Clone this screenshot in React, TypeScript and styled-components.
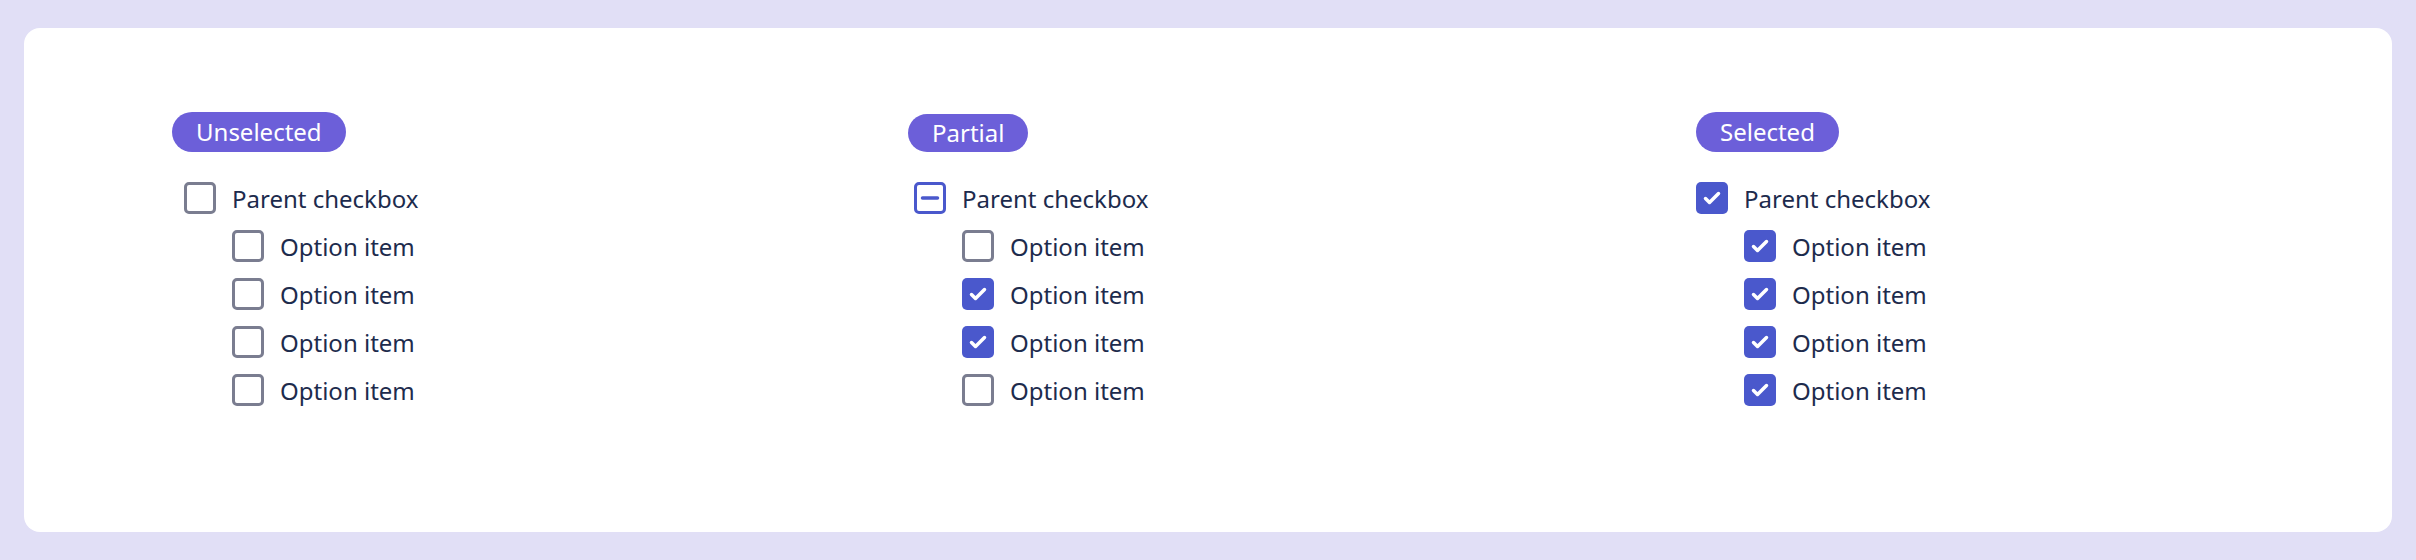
import React from "react";
import styled, { createGlobalStyle } from "styled-components";

const Global = createGlobalStyle`
  html, body { margin: 0; padding: 0; }
  body {
    background: #e1dff6;
    font-family: "Noto Sans", "Open Sans", sans-serif;
  }
`;

const Page = styled.div`
  box-sizing: border-box;
  width: 2416px;
  height: 560px;
  padding: 28px 24px;
  background: #e1dff6;
`;

const Card = styled.div`
  box-sizing: border-box;
  height: 504px;
  background: #ffffff;
  border-radius: 16px;
  padding: 84px 0 0 148px;
  display: grid;
  grid-template-columns: 736px 788px 1fr;
  align-items: start;
`;

const Column = styled.section`
  display: flex;
  flex-direction: column;
  align-items: flex-start;
`;

const Badge = styled.span<{ $nudge?: number }>`
  box-sizing: border-box;
  display: inline-flex;
  align-items: center;
  height: ${(p) => 40 - (p.$nudge ?? 0)}px;
  margin-top: ${(p) => p.$nudge ?? 0}px;
  padding: 0 24px;
  border-radius: 20px;
  background: #6c5fd9;
  color: #ffffff;
  font-size: 24px;
  line-height: 1;
`;

const List = styled.ul<{ $indent: number }>`
  list-style: none;
  margin: 22px 0 0 ${(p) => p.$indent}px;
  padding: 0;
  display: flex;
  flex-direction: column;
`;

const Row = styled.li<{ $child?: boolean }>`
  display: flex;
  align-items: center;
  gap: 16px;
  height: 48px;
  padding-left: ${(p) => (p.$child ? 48 : 0)}px;
  color: #1d2b4d;
  font-size: 24px;
`;

type State = "off" | "on" | "mixed";

const Box = styled.span<{ $state: State }>`
  box-sizing: border-box;
  flex: none;
  width: 32px;
  height: 32px;
  border-radius: 5px;
  display: inline-flex;
  align-items: center;
  justify-content: center;
  border: ${(p) =>
    p.$state === "on"
      ? "none"
      : p.$state === "mixed"
      ? "3px solid #4a58cc"
      : "3px solid #7a7d90"};
  background: ${(p) => (p.$state === "on" ? "#4a58cc" : "#ffffff")};
`;

const Label = styled.span`
  white-space: nowrap;
`;

function Checkbox({ state }: { state: State }) {
  return (
    <Box $state={state}>
      {state === "on" && (
        <svg width="32" height="32" viewBox="0 0 32 32" fill="none">
          <path
            d="M9.5 16.5 L13.5 20.5 L22.5 11.5"
            stroke="#ffffff"
            strokeWidth="3.5"
            strokeLinecap="round"
            strokeLinejoin="round"
          />
        </svg>
      )}
      {state === "mixed" && (
        <svg width="26" height="26" viewBox="0 0 26 26" fill="none">
          <path d="M5.5 13 H20.5" stroke="#4a58cc" strokeWidth="3.5" strokeLinecap="round" />
        </svg>
      )}
    </Box>
  );
}

type Group = {
  title: string;
  nudge: number;
  indent: number;
  parent: State;
  children: State[];
};

const groups: Group[] = [
  { title: "Unselected", nudge: 0, indent: 12, parent: "off", children: ["off", "off", "off", "off"] },
  { title: "Partial", nudge: 2, indent: 6, parent: "mixed", children: ["off", "on", "on", "off"] },
  { title: "Selected", nudge: 0, indent: 0, parent: "on", children: ["on", "on", "on", "on"] },
];

export default function App() {
  return (
    <>
      <Global />
      <Page>
        <Card>
          {groups.map((g) => (
            <Column key={g.title}>
              <Badge $nudge={g.nudge}>{g.title}</Badge>
              <List $indent={g.indent}>
                <Row>
                  <Checkbox state={g.parent} />
                  <Label>Parent checkbox</Label>
                </Row>
                {g.children.map((c, i) => (
                  <Row $child key={i}>
                    <Checkbox state={c} />
                    <Label>Option item</Label>
                  </Row>
                ))}
              </List>
            </Column>
          ))}
        </Card>
      </Page>
    </>
  );
}
